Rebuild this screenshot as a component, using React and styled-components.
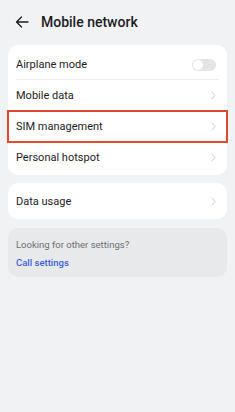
import React from "react";
import styled, { createGlobalStyle } from "styled-components";

const GlobalStyle = createGlobalStyle`
  html, body {
    margin: 0;
    padding: 0;
    background: #f1f2f4;
    font-family: Roboto, "Noto Sans", sans-serif;
    -webkit-font-smoothing: antialiased;
  }
`;

const Page = styled.div`
  width: 235px;
  min-height: 412px;
  background: #f1f2f4;
  display: flex;
  flex-direction: column;
`;

const Header = styled.div`
  height: 43px;
  display: flex;
  align-items: center;
  padding: 0 15px;
  gap: 12px;
  box-sizing: border-box;
  svg {
    display: block;
  }
`;

const Title = styled.h1`
  margin: 0;
  font-size: 14px;
  font-weight: 500;
  color: #1c1c1e;
`;

const Card = styled.div`
  margin: ${(p) => p.$mt || 0}px 8px 0;
  background: ${(p) => (p.$muted ? "#e8e9eb" : "#ffffff")};
  border-radius: 10px;
  padding: ${(p) => p.$pad || "0"};
  display: flex;
  flex-direction: column;
`;

const Row = styled.div`
  position: relative;
  height: ${(p) => p.$h || 31}px;
  display: flex;
  align-items: center;
  justify-content: space-between;
  padding: 0 11px 0 8px;
  font-size: 11px;
  color: #1c1c1e;
  &::after {
    content: "";
    display: ${(p) => (p.$divider ? "block" : "none")};
    position: absolute;
    left: 8px;
    right: 8px;
    bottom: 0;
    height: 1px;
    background: #ececee;
  }
`;

const Highlight = styled.div`
  position: absolute;
  left: -1px;
  right: -1px;
  top: -1px;
  bottom: -1px;
  border: 2px solid #e0492c;
  pointer-events: none;
`;

const Toggle = styled.div`
  width: 24px;
  height: 12px;
  border-radius: 6px;
  background: #e3e4e6;
  position: relative;
  &::before {
    content: "";
    position: absolute;
    left: 1px;
    top: 1px;
    width: 10px;
    height: 10px;
    border-radius: 50%;
    background: #ffffff;
  }
`;

const Hint = styled.div`
  font-size: 9.5px;
  color: #6e6f73;
  padding: 0 8px;
  line-height: 18px;
`;

const Link = styled.div`
  font-size: 9.5px;
  color: #3a5fd6;
  font-weight: 500;
  padding: 0 8px;
  line-height: 18px;
`;

const Chevron = () => (
  <svg width="5" height="9" viewBox="0 0 5 9">
    <path d="M1 1l3 3.5L1 8" fill="none" stroke="#c9cacd" strokeWidth="1" strokeLinecap="round" strokeLinejoin="round" />
  </svg>
);

const BackArrow = () => (
  <svg width="14" height="12" viewBox="0 0 14 12">
    <path d="M13 6H1.5M6.5 1L1.5 6l5 5" fill="none" stroke="#1c1c1e" strokeWidth="1.3" strokeLinecap="round" strokeLinejoin="round" />
  </svg>
);

export default function App() {
  return (
    <Page>
      <GlobalStyle />
      <Header>
        <BackArrow />
        <Title>Mobile network</Title>
      </Header>
      <Card $mt={2} $pad="4px 0 2px">
        <Row $divider>
          Airplane mode
          <Toggle />
        </Row>
        <Row>
          Mobile data
          <Chevron />
        </Row>
        <Row>
          SIM management
          <Chevron />
          <Highlight />
        </Row>
        <Row>
          Personal hotspot
          <Chevron />
        </Row>
      </Card>
      <Card $mt={8}>
        <Row $h={36}>
          Data usage
          <Chevron />
        </Row>
      </Card>
      <Card $mt={9} $muted $pad="8px 0 5px">
        <Hint>Looking for other settings?</Hint>
        <Link>Call settings</Link>
      </Card>
    </Page>
  );
}
